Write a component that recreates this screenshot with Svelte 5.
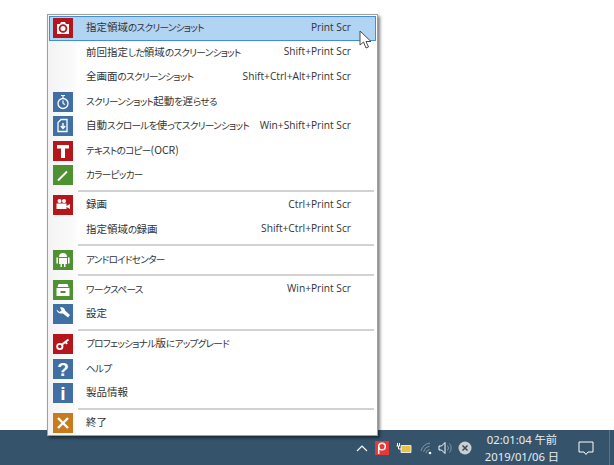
<script>
  const groups = [
    [
      { id: 'camera', bg: 'red', label: '指定領域のスクリーンショット', key: 'Print Scr', active: true },
      { label: '前回指定した領域のスクリーンショット', key: 'Shift+Print Scr' },
      { label: '全画面のスクリーンショット', key: 'Shift+Ctrl+Alt+Print Scr' },
      { id: 'timer', bg: 'blue', label: 'スクリーンショット起動を遅らせる' },
      { id: 'scroll', bg: 'blue', label: '自動スクロールを使ってスクリーンショット', key: 'Win+Shift+Print Scr' },
      { id: 'text', bg: 'red', label: 'テキストのコピー(OCR)' },
      { id: 'picker', bg: 'green', label: 'カラーピッカー' }
    ],
    [
      { id: 'video', bg: 'red', label: '録画', key: 'Ctrl+Print Scr' },
      { label: '指定領域の録画', key: 'Shift+Ctrl+Print Scr' }
    ],
    [{ id: 'android', bg: 'green', label: 'アンドロイドセンター' }],
    [
      { id: 'workspace', bg: 'green', label: 'ワークスペース', key: 'Win+Print Scr' },
      { id: 'wrench', bg: 'blue', label: '設定' }
    ],
    [
      { id: 'key', bg: 'red', label: 'プロフェッショナル版にアップグレード' },
      { id: 'help', bg: 'blue', label: 'ヘルプ' },
      { id: 'info', bg: 'blue', label: '製品情報' }
    ],
    [{ id: 'exit', bg: 'orange', label: '終了' }]
  ];

  // kana runs are set narrower than kanji, like the UI font of the original
  const runs = (label) => label.split(/([\u3040-\u30ff]+)/).filter(Boolean);
  const isKana = (run) => /^[\u3040-\u30ff]/.test(run);
</script>

{#snippet glyph(id)}
  <svg viewBox="0 0 20 20" width="20" height="20">
    {#if id === 'camera'}
      <path d="M4 6h3l1-2h4l1 2h3v10H4z" fill="#fff" />
      <circle cx="10" cy="10.500" r="3.400" fill="none" stroke="#b5161c" stroke-width="1.800" />
    {:else if id === 'timer'}
      <circle cx="10" cy="11.500" r="5" fill="none" stroke="#fff" stroke-width="1.300" />
      <path d="M8 3.500h4M10 3.500v3M10 11.500V8.500M10 11.500l2 1" stroke="#fff" stroke-width="1.200" fill="none" />
    {:else if id === 'scroll'}
      <path d="M8 3.500h6v12H5V6.500z" fill="none" stroke="#fff" stroke-width="1.300" />
      <path d="M10 7v5M7.800 10l2.200 2.500 2.200-2.500" stroke="#fff" stroke-width="1.400" fill="none" />
    {:else if id === 'text'}
      <path d="M4 4h12v3.500h-4V17H8V7.500H4z" fill="#fff" />
    {:else if id === 'picker'}
      <path d="M5 15.500l9-9" stroke="#fff" stroke-width="2" fill="none" />
    {:else if id === 'video'}
      <circle cx="6.500" cy="6" r="2" fill="#fff" />
      <circle cx="11" cy="6" r="2" fill="#fff" />
      <path d="M3.500 8.500h10v5.500h-10zM13.500 11l3.500-2v5l-3.500-2z" fill="#fff" />
    {:else if id === 'android'}
      <path d="M6 7a4 4 0 0 1 8 0zM6 8h8v6h-1.500v3h-1.500v-3H9v3H7.500v-3H6z" fill="#fff" />
      <path d="M4.200 8v5M15.800 8v5" stroke="#fff" stroke-width="1.600" stroke-linecap="round" />
    {:else if id === 'workspace'}
      <path d="M5.500 4h9l1 3h-11z" fill="#fff" />
      <path d="M3.500 8h13v8h-13z" fill="#fff" />
      <path d="M7.500 11h5v2h-5z" fill="#4f9033" />
    {:else if id === 'wrench'}
      <path d="M3.500 5.500l3 2.500 2-1.500-1.500-3c2.500-1 5 .5 5 3l5 4.500-2 2.500-5-4c-2.500.5-6-.5-6.500-4z" fill="#fff" />
    {:else if id === 'key'}
      <circle cx="6.800" cy="12.500" r="2.700" fill="none" stroke="#fff" stroke-width="1.800" />
      <path d="M9 10.500l6.500-5M12.500 8l1.500 2" stroke="#fff" stroke-width="2" fill="none" />
    {:else if id === 'help'}
      <text class="mark" x="10" y="16.500">?</text>
    {:else if id === 'info'}
      <text class="mark" x="10" y="16.500">i</text>
    {:else if id === 'exit'}
      <path d="M5 5l10 10M15 5L5 15" stroke="#fff" stroke-width="2.400" />
    {/if}
  </svg>
{/snippet}

<div class="screen">
  <div class="desktop"></div>

  <footer class="taskbar">
    <div class="tray">
      <svg class="chevron" viewBox="0 0 12 8" width="12" height="8"><path d="M1 7l5-5 5 5" fill="none" stroke="#fff" stroke-width="1.200" /></svg>
      <span class="tray-p"><svg viewBox="0 0 14 14" width="14" height="14"><circle cx="7" cy="5.500" r="3.300" fill="none" stroke="#fff" stroke-width="1.500" /><path d="M3.700 5.500V13" stroke="#fff" stroke-width="1.500" /></svg></span>
      <svg class="power" viewBox="0 0 16 12" width="16" height="12">
        <path d="M5 3.500h10v7H5z" fill="#e5c24a" stroke="#fff" stroke-width=".8" />
        <path d="M.5 4h3.500M1.500 1v3M3.500 1v3M2.500 4v3h3" fill="none" stroke="#fff" stroke-width="1" />
      </svg>
      <svg class="wifi" viewBox="0 0 16 14" width="16" height="14">
        <path d="M1 10a11 11 0 0 1 9-8M3.500 11a8 8 0 0 1 6-6M6 12a4.500 4.500 0 0 1 3.500-3.500" fill="none" stroke="#8496a5" stroke-width="1" />
        <circle cx="10" cy="12" r="1.300" fill="#fff" />
      </svg>
      <svg class="sound" viewBox="0 0 16 14" width="16" height="14">
        <path d="M1 5h2.500L7 1.500v11L3.500 9H1z" fill="none" stroke="#fff" stroke-width="1" />
        <path d="M9.500 4.500a4 4 0 0 1 0 5M11.500 2.500a7 7 0 0 1 0 9" fill="none" stroke="#8496a5" stroke-width="1" />
      </svg>
      <span class="tray-x"><svg viewBox="0 0 14 14" width="14" height="14"><circle cx="7" cy="7" r="6.500" fill="#c9ced2" /><path d="M4.500 4.500l5 5M9.500 4.500l-5 5" stroke="#3a4a58" stroke-width="1.500" /></svg></span>
    </div>
    <div class="clock">
      <span>02:01:04 午前</span>
      <span>2019/01/06 日</span>
    </div>
    <svg class="notify" viewBox="0 0 16 16" width="16" height="16"><path d="M1 2h14v10h-5l-2 2.500L6 12H1z" fill="none" stroke="#fff" stroke-width="1" /></svg>
    <div class="edge"></div>
  </footer>

  <nav class="menu">
    {#each groups as group, g}
      {#if g > 0}
        <div class="sep"></div>
      {/if}
      {#each group as item}
        <div class="item" class:active={item.active}>
          <span class="icon {item.bg ?? ''}">
            {#if item.id}{@render glyph(item.id)}{/if}
          </span>
          <span class="label">{#each runs(item.label) as run}<span class:kana={isKana(run)}>{run}</span>{/each}</span>
          {#if item.key}<span class="key">{item.key}</span>{/if}
        </div>
      {/each}
    {/each}
  </nav>

  <svg class="cursor" viewBox="0 0 14 20" width="14" height="20">
    <path d="M1 1v14l3.500-3 2.500 6 2.500-1-2.500-5.500H12z" fill="#fff" stroke="#4a4a4a" stroke-width="1" />
  </svg>
</div>

<style>
  :global(body) {
    margin: 0;
    background: #fff;
  }

  .screen {
    position: relative;
    width: 614px;
    height: 465px;
    overflow: hidden;
    display: flex;
    flex-direction: column;
    font-family: "Noto Sans CJK JP", "Noto Sans", sans-serif;
  }

  .desktop {
    flex: 1;
    background: #fff;
  }

  .taskbar {
    height: 35px;
    background: #35546b;
    display: flex;
    align-items: center;
    justify-content: flex-end;
    color: #e8edf1;
  }

  .tray {
    display: flex;
    align-items: center;
    margin-right: 14px;
  }

  .chevron { margin-right: 7px; }
  .tray-p {
    width: 14px;
    height: 14px;
    background: #e23a3a;
    margin-right: 7px;
    display: flex;
  }
  .power { margin-right: 8px; }
  .wifi { margin-right: 2px; }
  .sound { margin-right: 4px; }
  .tray-x { display: flex; }

  .clock {
    display: flex;
    flex-direction: column;
    align-items: center;
    font-size: 11.3px;
    line-height: 17px;
    font-family: "Noto Sans", "Noto Sans CJK JP", sans-serif;
    margin-right: 20px;
    width: 72px;
    white-space: nowrap;
  }

  .notify { margin-right: 15px; }

  .edge {
    width: 1px;
    height: 35px;
    background: #5a7486;
    margin-right: 4px;
  }

  .menu {
    position: absolute;
    left: 47px;
    top: 14px;
    width: 331px;
    height: 422px;
    box-sizing: border-box;
    padding: 1px;
    background: linear-gradient(to right, #f3f3f3, #fbfbfb 27px, #fff 30px);
    border: 1px solid #a0a0a0;
    box-shadow: 2px 2px 3px rgba(0, 0, 0, 0.5);
  }

  .item {
    height: 24.5px;
    box-sizing: border-box;
    display: flex;
    align-items: center;
    padding-left: 4px;
    padding-right: 25px;
    font-size: 10.5px;
    color: #333;
    white-space: nowrap;
  }

  .item.active {
    background: #b2d4f3;
    outline: 1px solid #3f8fd6;
    outline-offset: -1px;
  }

  .icon {
    width: 20px;
    height: 20px;
    display: flex;
    align-items: center;
    justify-content: center;
    flex: none;
  }

  .red { background: #b5161c; }
  .blue { background: #3f6fa3; }
  .green { background: #4f9033; }
  .orange { background: #c77a1e; }

  .mark {
    fill: #fff;
    font-size: 19px;
    font-weight: 700;
    text-anchor: middle;
    font-family: "Liberation Sans", sans-serif;
  }

  .label {
    margin-left: 13px;
    padding-bottom: 3px;
    font-feature-settings: "palt";
    flex: 1;
  }

  .kana {
    font-size: 9.6px;
    letter-spacing: -0.7px;
  }

  .key {
    font-family: "Open Sans", "Noto Sans", sans-serif;
    font-size: 10.2px;
    padding-bottom: 3px;
  }

  .sep {
    height: 2px;
    margin: 2px 2px 1.5px 29px;
    background: #d2d2d2;
  }

  .cursor {
    position: absolute;
    left: 359px;
    top: 30px;
  }
</style>
